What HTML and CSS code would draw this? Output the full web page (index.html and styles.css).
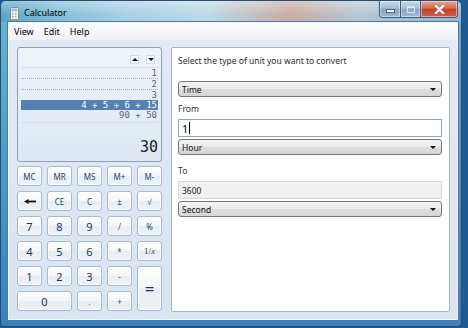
FILE: index.html
```html
<!DOCTYPE html>
<html lang="en">
<head>
    <meta charset="UTF-8">
    <title>Calculator</title>
    <link rel="stylesheet" href="styles.css">
</head>
<body>
    <div class="window">
        <!-- Barra de título -->
        <div class="titlebar">
            <svg class="app-icon" width="9" height="13" viewBox="0 0 9 13">
                <rect x="0.5" y="0.5" width="8" height="12" rx="1" fill="#f4f4f0" stroke="#8a8f96"/>
                <rect x="1.5" y="1.5" width="6" height="3" fill="#9cc0df"/>
                <rect x="2" y="6" width="1.5" height="1.5" fill="#9a9a9a"/>
                <rect x="5" y="6" width="1.5" height="1.5" fill="#9a9a9a"/>
                <rect x="2" y="9" width="1.5" height="1.5" fill="#9a9a9a"/>
                <rect x="5" y="9" width="1.5" height="1.5" fill="#e0a030"/>
            </svg>
            <span class="title">Calculator</span>
            <div class="caption">
                <span class="cap-btn cap-min"><i></i></span>
                <span class="cap-btn cap-max"><i></i></span>
                <span class="cap-btn cap-close">
                    <svg width="11" height="9" viewBox="0 0 11 9">
                        <path d="M2 1 L9 8 M9 1 L2 8" stroke="#fff" stroke-width="2.2" stroke-linecap="square"/>
                    </svg>
                </span>
            </div>
        </div>

        <div class="frame">
            <nav class="menubar">
                <span>View</span>
                <span>Edit</span>
                <span>Help</span>
            </nav>

            <div class="client">
                <!-- Calculadora -->
                <section class="calc">
                    <div class="display">
                        <div class="scroll-arrows">
                            <span class="arrow-btn"><i class="tri-up"></i></span>
                            <span class="arrow-btn"><i class="tri-down"></i></span>
                        </div>
                        <ul class="history">
                            <li class="dotted">1</li>
                            <li class="dotted">2</li>
                            <li>3</li>
                            <li class="selected">4 + 5 + 6 + 15</li>
                            <li>90 + 50</li>
                        </ul>
                        <div class="result">30</div>
                    </div>

                    <div class="keys">
                        <button class="key small">MC</button>
                        <button class="key small">MR</button>
                        <button class="key small">MS</button>
                        <button class="key small">M+</button>
                        <button class="key small">M-</button>

                        <button class="key">
                            <svg width="12" height="5" viewBox="0 0 12 5">
                                <path d="M0 2.5 L4.5 0 V5 Z" fill="#111"/>
                                <rect x="3" y="1.6" width="9" height="1.8" fill="#111"/>
                            </svg>
                        </button>
                        <button class="key small">CE</button>
                        <button class="key small">C</button>
                        <button class="key small">±</button>
                        <button class="key small">√</button>

                        <button class="key digit">7</button>
                        <button class="key digit">8</button>
                        <button class="key digit">9</button>
                        <button class="key op">/</button>
                        <button class="key small">%</button>

                        <button class="key digit">4</button>
                        <button class="key digit">5</button>
                        <button class="key digit">6</button>
                        <button class="key op">*</button>
                        <button class="key recip">1/<em>x</em></button>

                        <button class="key digit">1</button>
                        <button class="key digit">2</button>
                        <button class="key digit">3</button>
                        <button class="key op">-</button>
                        <button class="key equals">=</button>

                        <button class="key digit zero">0</button>
                        <button class="key op">.</button>
                        <button class="key op">+</button>
                    </div>
                </section>

                <!-- Conversión de unidades -->
                <section class="converter">
                    <p class="heading">Select the type of unit you want to convert</p>
                    <div class="combo first"><span>Time</span><i class="tri-down"></i></div>

                    <p class="label">From</p>
                    <div class="field focused"><span>1</span><i class="caret"></i></div>
                    <div class="combo"><span>Hour</span><i class="tri-down"></i></div>

                    <p class="label to">To</p>
                    <div class="field readonly"><span>3600</span></div>
                    <div class="combo"><span>Second</span><i class="tri-down"></i></div>
                </section>
            </div>
        </div>
    </div>
</body>
</html>
```

FILE: styles.css
```css
body {
    margin: 0;
    background: #1f5a94;
    font-family: 'Noto Sans', 'Open Sans', sans-serif;
}

/* Ventana */
.window {
    width: 462px;
    height: 327px;
    box-sizing: border-box;
    border: 1px solid #284d72;
    border-radius: 6px 6px 4px 4px;
    background: linear-gradient(180deg, #6fb3d2 0%, #4d9ac6 50%, #3a7fbe 100%);
    display: flex;
    flex-direction: column;
    overflow: hidden;
}

.titlebar {
    height: 21px;
    flex-shrink: 0;
    display: flex;
    align-items: flex-start;
    padding-left: 9px;
    background:
        linear-gradient(180deg, rgba(255, 255, 255, 0.35), rgba(255, 255, 255, 0) 70%),
        linear-gradient(90deg, #5aa4c6 0%, #82bcd8 12%, #a9d0e4 28%, #bcd8e6 45%, #c8aca2 63%, #b5c6d4 78%, #91b6d5 100%);
}

.app-icon {
    margin-top: 6px;
}

.title {
    margin-left: 5px;
    font-size: 9px;
    line-height: 12px;
    margin-top: 6px;
    color: #000;
}

.caption {
    margin-left: auto;
    margin-right: 3px;
    display: flex;
    height: 17px;
    border: 1px solid #3e5874;
    border-top: none;
    border-radius: 0 0 4px 4px;
    overflow: hidden;
    box-sizing: border-box;
}

.cap-btn {
    display: flex;
    align-items: center;
    justify-content: center;
    height: 100%;
    background: linear-gradient(180deg, #c8d8e8 0%, #a8bfd6 45%, #8aa6c3 50%, #9fb9d3 100%);
    box-shadow: inset 0 0 0 1px rgba(255, 255, 255, 0.45);
}

.cap-min {
    width: 20px;
    border-right: 1px solid #3e5874;
}

.cap-min i {
    width: 7px;
    height: 2px;
    margin-top: 3px;
    background: #fff;
    box-shadow: 0 0 0 1px #4a6480;
}

.cap-max {
    width: 19px;
    border-right: 1px solid #3e5874;
}

.cap-max i {
    width: 6px;
    height: 4px;
    border: 1px solid #e9f0f7;
    border-top-width: 2px;
    opacity: 0.8;
}

.cap-close {
    width: 36px;
    background: linear-gradient(180deg, #e6a495 0%, #d46a55 45%, #c4402a 52%, #d2604a 100%);
}

/* Marco interior */
.frame {
    flex: 1;
    display: flex;
    flex-direction: column;
    margin: 0 3px 6px 7px;
    border: 1px solid #f3f7fb;
    box-shadow: 0 0 0 1px #4d78a3;
    background: #dbe6f2;
}

.menubar {
    height: 17px;
    display: flex;
    align-items: center;
    font-size: 9px;
    color: #000;
    background: linear-gradient(180deg, #fbfcfe, #eef2f7);
    border-bottom: 1px solid #e3eaf2;
}

.menubar span {
    padding: 0 5px;
}

.client {
    flex: 1;
    display: flex;
    gap: 9px;
    padding: 6px 7px 7px 8px;
    background: linear-gradient(180deg, #e1eaf5, #d8e4f1);
}

/* Calculadora */
.calc {
    width: 145px;
    display: flex;
    flex-direction: column;
}

.display {
    height: 115px;
    box-sizing: border-box;
    border: 1px solid #8d9db3;
    border-radius: 3px;
    background: linear-gradient(180deg, #eef3f9, #dfe8f3);
    display: flex;
    flex-direction: column;
}

.scroll-arrows {
    display: flex;
    justify-content: flex-end;
    gap: 7px;
    margin: 7px 6px 0 0;
}

.arrow-btn {
    width: 9px;
    height: 9px;
    display: flex;
    align-items: center;
    justify-content: center;
    background: #f6f9fc;
    border: 1px solid #d4dde8;
    box-sizing: border-box;
}

.tri-up {
    width: 0;
    height: 0;
    border-left: 3px solid transparent;
    border-right: 3px solid transparent;
    border-bottom: 3px solid #111;
}

.tri-down {
    width: 0;
    height: 0;
    border-left: 3px solid transparent;
    border-right: 3px solid transparent;
    border-top: 3px solid #111;
}

.history {
    list-style: none;
    margin: 3px 3px 0;
    padding: 0 0 2px;
    border-top: 1px solid #d6dfea;
    border-bottom: 1px solid #d6dfea;
    font-family: 'DejaVu Sans Mono', 'Liberation Mono', monospace;
    font-size: 9px;
    color: #5b6472;
}

.history li {
    height: 10px;
    line-height: 10px;
    text-align: right;
    padding-right: 1px;
}

.history li.dotted {
    border-bottom: 1px dotted #9fb0c4;
}

.history li.selected {
    background: #5381b3;
    color: #fff;
}

.result {
    margin-top: auto;
    padding: 0 3px 5px 0;
    text-align: right;
    font-family: 'DejaVu Sans Mono', 'Liberation Mono', monospace;
    font-size: 15px;
    line-height: 18px;
    color: #1a1a1a;
}

.keys {
    margin-top: 4px;
    display: grid;
    grid-template-columns: repeat(5, 25px);
    grid-auto-rows: 20px;
    gap: 5px;
}

.key {
    margin: 0;
    padding: 0;
    border: 1px solid #a9b8ca;
    border-radius: 3px;
    background: linear-gradient(180deg, #fdfeff 0%, #f3f6fa 48%, #e7edf4 52%, #edf2f8 100%);
    box-shadow: inset 0 0 0 1px rgba(255, 255, 255, 0.7);
    font-family: 'Noto Sans', sans-serif;
    color: #283f5c;
    display: flex;
    align-items: center;
    justify-content: center;
}

.key.small {
    font-size: 8px;
}

.key.digit {
    font-size: 11px;
    color: #1e3553;
}

.key.op {
    font-size: 8px;
    color: #3c4f66;
}

.key.recip {
    font-family: 'Liberation Serif', serif;
    font-size: 9px;
}

.key.equals {
    grid-column: 5;
    grid-row: 5 / span 2;
    font-size: 17px;
    color: #1e3553;
}

.key.zero {
    grid-column: 1 / span 2;
}

/* Conversión */
.converter {
    flex: 1;
    background: #fff;
    border: 1px solid #a8b5c4;
    border-radius: 2px;
    padding: 0 7px 0 6px;
    font-size: 8.5px;
    color: #333;
}

.heading {
    margin: 7px 0 0;
    line-height: 12px;
    color: #2c2c2c;
}

.label {
    margin: 6px 0 0;
    line-height: 12px;
}

.label.to {
    margin-top: 10px;
}

.combo {
    height: 16px;
    box-sizing: border-box;
    margin-top: 2px;
    border: 1px solid #777;
    border-radius: 3px;
    background: linear-gradient(180deg, #f3f3f3 0%, #ebebeb 48%, #dddddd 52%, #d6d6d6 100%);
    display: flex;
    align-items: center;
    justify-content: space-between;
    padding: 0 5px 0 3px;
    color: #111;
}

.combo.first {
    margin-top: 14px;
}

.field {
    height: 18px;
    box-sizing: border-box;
    margin-top: 4px;
    display: flex;
    align-items: center;
    padding-left: 3px;
}

.field.focused {
    border: 1px solid #8fa7c4;
    background: #fff;
    font-size: 11px;
    color: #000;
}

.caret {
    width: 1px;
    height: 12px;
    background: #000;
    margin-left: 1px;
}

.field.readonly {
    border: 1px solid #d6d6d6;
    background: #f0f0f0;
    color: #222;
}
```
